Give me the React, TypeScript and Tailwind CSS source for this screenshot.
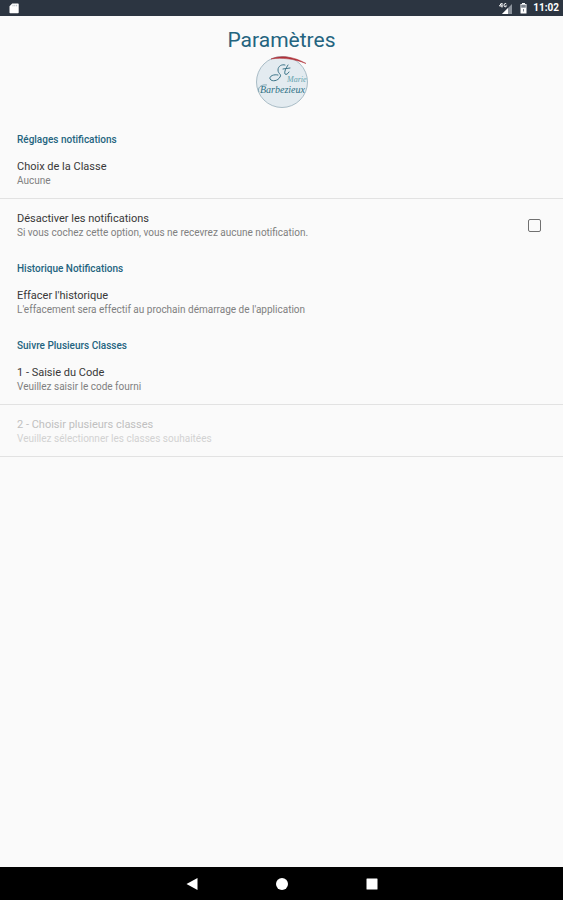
import type { ReactNode } from 'react'

interface ItemProps {
  title: string
  summary: string
  divider?: boolean
  disabled?: boolean
}

function StatusBar() {
  return (
    <div className="flex h-4 items-center justify-between bg-[#2c3541] pl-2 pr-1 text-white">
      <svg className="h-3 w-3" viewBox="0 0 12 12" fill="currentColor">
        <path d="M4.2 1.5H10a.7.7 0 0 1 .7.7v8.4a.7.7 0 0 1-.7.7H2.2a.7.7 0 0 1-.7-.7V4.2z" />
        <path d="M5 2.8v1.5M6.8 2.8v1.5M8.6 2.8v1.5" stroke="#9aa3ad" strokeWidth="0.7" />
      </svg>
      <div className="flex items-center gap-1">
        <svg className="h-3 w-4" viewBox="0 0 16 12">
          <path d="M15 2v10H5z" fill="#8b929b" />
          <path d="M11 6v6H5z" fill="#fff" />
          <path d="M4.500 1 2.500 4h3M5 1v4.500M9.500 2.200C9 1 7 1.200 7 3.200S9 5.400 9.500 3.800H8.500" fill="none" stroke="#fff" />
        </svg>
        <svg className="h-3 w-3" viewBox="0 0 12 12">
          <path d="M5 1h3v1h1.500v9.500h-6V2H5z" fill="#fff" />
          <path d="M4.200 2.700h4.600v3H4.200z" fill="#7d858f" />
          <path d="M6 7h1v2.500H6z" fill="#7d858f" />
        </svg>
        <span className="text-[10px] leading-4 font-bold">11:02</span>
      </div>
    </div>
  )
}

function Logo() {
  return (
    <svg className="h-[54px] w-14" viewBox="0 0 56 54">
      <circle cx="28" cy="28" r="25.500" fill="#e3ebf0" stroke="#a9bcc6" strokeWidth="1" />
      <path d="M17 5C26 1 39 2 52 9.500 40 4.800 28 3.300 17 5z" fill="#b03038" stroke="#b03038" strokeWidth="0.500" />
      <path
        d="M31 11c-3-1-7 1-7 5s4 4 2 7c-2 4-8 5-10 2-1-3 4-5 8-4M34 11c-2 3-4 7-3 9 1 1 3 0 4-2M29 15l7-1"
        fill="none"
        stroke="#3c7488"
        strokeLinecap="round"
      />
      <g fontFamily="'Liberation Serif', serif" fontStyle="italic">
        <text x="33" y="28" fontSize="8" fill="#62a3ae">Marie</text>
        <text x="6" y="39" fontSize="10" fill="#2e7186">Barbezieux</text>
      </g>
      <path d="M5 38c-2-4 2-8 8-7" fill="none" stroke="#5b8c9d" strokeWidth="0.700" />
    </svg>
  )
}

function SectionTitle({ children }: { children: ReactNode }) {
  return <h2 className="px-[17px] pt-3 text-[10px] leading-[14px] font-medium text-[#24647f]">{children}</h2>
}

function ItemText({ title, summary, disabled }: ItemProps) {
  return (
    <span className="block">
      <span className={`block text-[11px] leading-[15px] ${disabled ? 'text-[#c0c0c0]' : 'text-[#383838]'}`}>{title}</span>
      <span className={`block text-[10px] leading-[14px] ${disabled ? 'text-[#d2d2d2]' : 'text-[#808080]'}`}>{summary}</span>
    </span>
  )
}

function Item(props: ItemProps) {
  return (
    <button
      type="button"
      disabled={props.disabled}
      className={`block w-full px-[17px] pt-3 pb-[10px] text-left ${props.divider ? 'border-b border-[#e2e2e2]' : ''}`}
    >
      <ItemText {...props} />
    </button>
  )
}

function CheckboxItem(props: ItemProps) {
  return (
    <label className="flex items-center justify-between pt-3 pr-[22px] pb-[10px] pl-[17px]">
      <ItemText {...props} />
      <input type="checkbox" className="h-[13px] w-[13px] appearance-none rounded-xs border border-[#707070] checked:bg-[#24647f]" />
    </label>
  )
}

function NavBar() {
  return (
    <nav className="flex h-[33px] items-center justify-center gap-[74px] bg-black text-white">
      <button type="button" aria-label="Retour">
        <svg className="h-4 w-4" viewBox="0 0 16 16" fill="currentColor">
          <path d="M13.500 2v12L2.500 8z" />
        </svg>
      </button>
      <button type="button" aria-label="Accueil">
        <svg className="h-4 w-4" viewBox="0 0 16 16" fill="currentColor">
          <circle cx="8" cy="8" r="6" />
        </svg>
      </button>
      <button type="button" aria-label="Applications récentes">
        <svg className="h-4 w-4" viewBox="0 0 16 16" fill="currentColor">
          <rect x="2.500" y="2.500" width="11" height="11" rx="0.500" />
        </svg>
      </button>
    </nav>
  )
}

export default function App() {
  return (
    <div className="flex min-h-screen flex-col bg-[#fafafa] font-['Roboto',sans-serif]">
      <StatusBar />
      <header className="flex flex-col items-center pt-[10px] pb-[13px]">
        <h1 className="text-[21px] leading-7 text-[#24647f]">Paramètres</h1>
        <Logo />
      </header>
      <main className="flex-1">
        <SectionTitle>Réglages notifications</SectionTitle>
        <Item title="Choix de la Classe" summary="Aucune" divider />
        <CheckboxItem
          title="Désactiver les notifications"
          summary="Si vous cochez cette option, vous ne recevrez aucune notification."
        />
        <SectionTitle>Historique Notifications</SectionTitle>
        <Item title="Effacer l'historique" summary="L'effacement sera effectif au prochain démarrage de l'application" />
        <SectionTitle>Suivre Plusieurs Classes</SectionTitle>
        <Item title="1 - Saisie du Code" summary="Veuillez saisir le code fourni" divider />
        <Item title="2 - Choisir plusieurs classes" summary="Veuillez sélectionner les classes souhaitées" divider disabled />
      </main>
      <NavBar />
    </div>
  )
}
